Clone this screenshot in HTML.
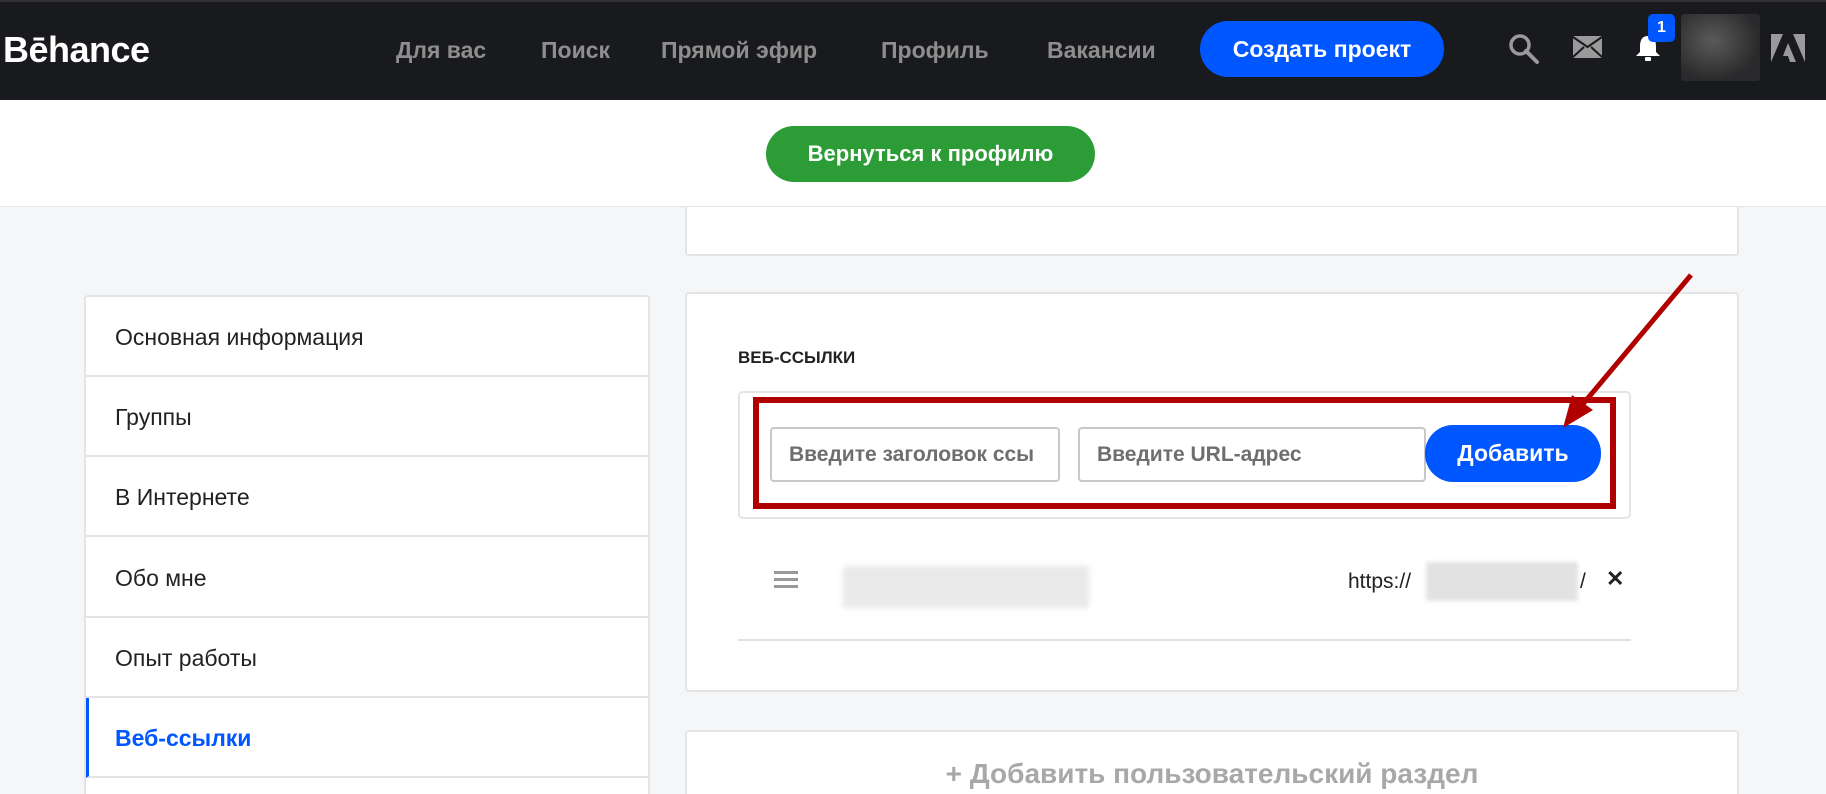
<!DOCTYPE html>
<html style="width:1826px;height:794px;overflow:hidden"><head><meta charset="utf-8"><style>
*{margin:0;padding:0;box-sizing:border-box}
body{width:1826px;height:794px;overflow:hidden;background:#f5f6f8;font-family:"Liberation Sans",Arial,sans-serif;position:relative}
.a{position:absolute}
.hdr{left:0;top:0;width:1826px;height:100px;background:#191a1d;border-top:2px solid #333}
.nav{top:37px;font-size:23px;font-weight:bold;color:#8e8e8e}
.sub{left:0;top:100px;width:1826px;height:107px;background:#fff;border-bottom:1px solid #e6e6e6}
.card{background:#fff;border:2px solid #e4e4e6;border-radius:4px}
.item{left:0;width:100%;height:80px;border-bottom:2px solid #e4e4e6;font-size:23px;color:#222;padding-left:29px;line-height:80px}
.inp{background:#fff;border:2px solid #c8c8c8;border-radius:4px;font-size:21px;font-weight:bold;color:#6e6e6e;line-height:51px;padding-left:17px;overflow:hidden;white-space:nowrap}
</style></head><body>
<div class="a hdr"></div>
<div class="a" style="left:3px;top:29px;font-size:36px;font-weight:bold;color:#fff;letter-spacing:-0.5px">Bēhance</div>
<div class="a nav" style="left:396px">Для вас</div>
<div class="a nav" style="left:541px">Поиск</div>
<div class="a nav" style="left:661px">Прямой эфир</div>
<div class="a nav" style="left:881px">Профиль</div>
<div class="a nav" style="left:1047px">Вакансии</div>
<div class="a" style="left:1200px;top:21px;width:244px;height:56px;background:#0057ff;border-radius:28px;color:#fff;font-weight:bold;font-size:23px;text-align:center;line-height:56px">Создать проект</div>
<svg class="a" style="left:1508px;top:33px" width="34" height="32" viewBox="0 0 34 32"><circle cx="12" cy="12" r="9" fill="none" stroke="#9a9a9a" stroke-width="3.5"/><path d="M18 18 L29 29" stroke="#9a9a9a" stroke-width="4" stroke-linecap="round"/></svg>
<svg class="a" style="left:1573px;top:36px" width="29" height="22" viewBox="0 0 29 22"><rect width="29" height="22" rx="1" fill="#9a9a9a"/><path d="M0 1 L14.5 11 L29 1 M0 21 L11 11 M29 21 L18 11" stroke="#191a1d" stroke-width="2" fill="none"/></svg>
<svg class="a" style="left:1635px;top:34px" width="26" height="28" viewBox="0 0 26 28"><path d="M13 2 C6 2 5 8 5 13 L5 18 L1 22 L25 22 L21 18 L21 13 C21 8 20 2 13 2Z" fill="#fff"/><rect x="10" y="23" width="6" height="4" rx="1" fill="#fff"/></svg>
<div class="a" style="left:1648px;top:14px;width:27px;height:28px;background:#0057ff;border-radius:5px;color:#fff;font-weight:bold;font-size:16px;text-align:center;line-height:28px">1</div>
<div class="a" style="left:1681px;top:14px;width:79px;height:67px;background:radial-gradient(ellipse at 40% 40%,#5a5a5a,#2a2a2c 70%);border-radius:3px"></div>
<svg class="a" style="left:1771px;top:34px" width="34" height="28" viewBox="0 0 34 28"><path d="M0 0 H12 L0 28Z M22 0 H34 V28Z M17 9 L25 28 H19 L17 22 H12Z" fill="#9a9a9a"/></svg>

<div class="a sub"></div>
<div class="a" style="left:766px;top:126px;width:329px;height:56px;background:#2c9c36;border-radius:28px;color:#fff;font-weight:bold;font-size:22px;text-align:center;line-height:56px">Вернуться к профилю</div>

<div class="a card" style="left:685px;top:207px;width:1054px;height:49px;border-top:none;border-radius:0 0 4px 4px"></div>

<div class="a card" style="left:84px;top:295px;width:566px;height:520px;overflow:hidden">
<div class="a item" style="top:0">Основная информация</div>
<div class="a item" style="top:80px">Группы</div>
<div class="a item" style="top:160px">В Интернете</div>
<div class="a item" style="top:241px">Обо мне</div>
<div class="a item" style="top:321px">Опыт работы</div>
<div class="a item" style="top:401px;color:#0057ff;font-weight:bold;border-left:3px solid #0057ff;padding-left:26px">Веб-ссылки</div>
</div>

<div class="a card" style="left:685px;top:292px;width:1054px;height:400px"></div>
<div class="a" style="left:738px;top:348px;font-size:17px;font-weight:bold;color:#222">ВЕБ-ССЫЛКИ</div>
<div class="a" style="left:738px;top:391px;width:893px;height:128px;border:2px solid #e4e4e6;border-radius:5px"></div>
<div class="a" style="left:753px;top:397px;width:863px;height:112px;border:6px solid #b00000"></div>
<div class="a inp" style="left:770px;top:427px;width:290px;height:55px">Введите заголовок ссы</div>
<div class="a inp" style="left:1078px;top:427px;width:348px;height:55px">Введите URL-адрес</div>
<div class="a" style="left:1425px;top:425px;width:176px;height:57px;background:#0057ff;border-radius:28px;color:#fff;font-weight:bold;font-size:23px;text-align:center;line-height:57px">Добавить</div>
<div class="a" style="left:774px;top:571px;width:24px;height:3px;background:#999;box-shadow:0 7px 0 #999,0 14px 0 #999"></div>
<div class="a" style="left:843px;top:566px;width:246px;height:42px;background:#e9e9e9;filter:blur(3px)"></div>
<div class="a" style="left:1348px;top:570px;font-size:21px;color:#222">https://</div>
<div class="a" style="left:1426px;top:562px;width:152px;height:39px;background:#e2e2e2;filter:blur(2px)"></div>
<div class="a" style="left:1580px;top:570px;font-size:21px;color:#222">/</div>
<div class="a" style="left:1606px;top:566px;font-size:22px;color:#222;font-weight:bold">✕</div>
<div class="a" style="left:738px;top:639px;width:893px;height:2px;background:#e0e0e0"></div>

<div class="a card" style="left:685px;top:730px;width:1054px;height:100px"></div>
<div class="a" style="left:685px;top:758px;width:1054px;text-align:center;font-size:28px;font-weight:bold;color:#a8a8a8">+ Добавить пользовательский раздел</div>

<svg class="a" style="left:0;top:0" width="1826" height="794"><path d="M1691 275 L1578 410" stroke="#b00000" stroke-width="5"/><path d="M1563 428 L1572 395 L1593 410Z" fill="#b00000"/></svg>
</body></html>
